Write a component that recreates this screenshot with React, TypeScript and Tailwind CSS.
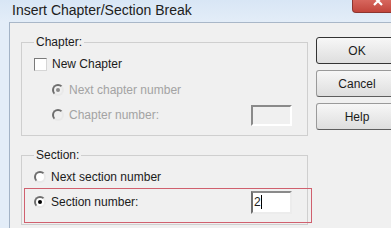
import React from "react";

const Radio: React.FC<{ checked?: boolean; disabled?: boolean }> = ({ checked, disabled }) => (
  <span
    className={`w-[12px] h-[12px] shrink-0 rounded-full border-2 border-t-[#6e6e6e] border-l-[#6e6e6e] border-r-[#e9e9e9] border-b-[#e9e9e9] flex items-center justify-center ${
      disabled ? "bg-[#f0f0f0]" : "bg-white"
    }`}
  >
    {checked && (
      <span className={`w-[4px] h-[4px] rounded-full ${disabled ? "bg-[#8a8a8a]" : "bg-black"}`} />
    )}
  </span>
);

const Checkbox: React.FC = () => (
  <span className="w-[13px] h-[13px] shrink-0 bg-white border border-t-[#7a7a7a] border-l-[#7a7a7a] border-r-[#d6d6d6] border-b-[#d6d6d6]" />
);

const DialogButton: React.FC<{ label: string; isDefault?: boolean }> = ({ label, isDefault }) => (
  <button
    className={`w-[82px] h-[27px] rounded-[3px] bg-gradient-to-b from-[#f7f7f7] to-[#dedede] text-[12px] text-[#1b1b1b] border ${
      isDefault ? "border-[#333333]" : "border-[#9a9a9a] border-b-[#5e5e5e]"
    }`}
  >
    {label}
  </button>
);

export default function App() {
  return (
    <div className="relative w-[391px] h-[238px] overflow-hidden bg-white font-['Liberation_Sans',Arial,sans-serif] text-[12px] text-[#1b1b1b]">
      {/* title bar */}
      <div className="h-[22px] bg-gradient-to-b from-[#d8e6f5] to-[#e3edf8] flex items-start">
        <div className="pl-[12px] pt-[2px] text-[14px] leading-[17px] text-[#202020]">
          Insert Chapter/Section Break
        </div>
        <div className="ml-auto mr-[-12px] w-[51px] h-[13px] shrink-0 rounded-b-[4px] bg-gradient-to-b from-[#d7665d] to-[#c2453c] border border-t-0 border-[#8d3530] flex justify-center items-start overflow-hidden">
          <svg width="10" height="10" viewBox="0 0 10 10" className="mt-[-4px]">
            <path d="M1 1 L9 9 M9 1 L1 9" stroke="#ffffff" strokeWidth="2.2" />
          </svg>
        </div>
      </div>

      <div className="flex h-[206px]">
        <div className="w-[10px] shrink-0 bg-[#e3edf8] border-r border-[#a3b3c6]" />
        <div className="flex-1 min-w-0 flex bg-[#f0f0f0] border-t border-[#a9b7c8] pl-[11px]">
          {/* left column */}
          <div className="w-[287px] shrink-0 flex flex-col">
            <fieldset className="mt-[11px] border border-[#cfcfcf] pl-[12px] pr-[15px] pb-[7px]">
              <legend className="px-[2px] leading-[16px]">Chapter:</legend>
              <div className="pt-[1px]">
                <div className="h-[26px] flex items-center gap-[5px]">
                  <Checkbox />
                  <span>New Chapter</span>
                </div>
                <div className="h-[25px] flex items-center gap-[5px] pl-[18px] text-[#a3a3a3]">
                  <Radio checked disabled />
                  <span>Next chapter number</span>
                </div>
                <div className="h-[26px] flex items-center gap-[5px] pl-[18px] text-[#a3a3a3]">
                  <Radio disabled />
                  <span>Chapter number:</span>
                  <span className="ml-auto w-[41px] h-[21px] bg-[#f0f0f0] border-2 border-t-[#8a8a8a] border-l-[#8a8a8a] border-r-[#ffffff] border-b-[#ffffff]" />
                </div>
              </div>
            </fieldset>

            <fieldset className="mt-[11px] border border-[#cfcfcf] pl-[12px] pr-[15px] pb-[10px]">
              <legend className="px-[2px] leading-[16px]">Section:</legend>
              <div className="pt-[1px]">
                <div className="h-[26px] flex items-center gap-[5px]">
                  <Radio />
                  <span>Next section number</span>
                </div>
                <div className="h-[24px] flex items-center gap-[5px]">
                  <Radio checked />
                  <span>Section number:</span>
                  <span className="ml-auto w-[41px] h-[23px] bg-white border-2 border-t-[#8a8a8a] border-l-[#6e6e6e] border-r-[#ececec] border-b-[#ececec] flex items-center pl-[1px]">
                    <span className="leading-[14px]">2</span>
                    <span className="w-[1px] h-[14px] bg-black" />
                  </span>
                </div>
              </div>
            </fieldset>
          </div>

          {/* buttons */}
          <div className="ml-[8px] pt-[14px] flex flex-col gap-[6px] shrink-0">
            <DialogButton label="OK" isDefault />
            <DialogButton label="Cancel" />
            <DialogButton label="Help" />
          </div>
        </div>
      </div>

      {/* annotation box */}
      <div className="absolute left-[24px] top-[188px] w-[288px] h-[35px] border border-[#d0606e]" />
    </div>
  );
}
